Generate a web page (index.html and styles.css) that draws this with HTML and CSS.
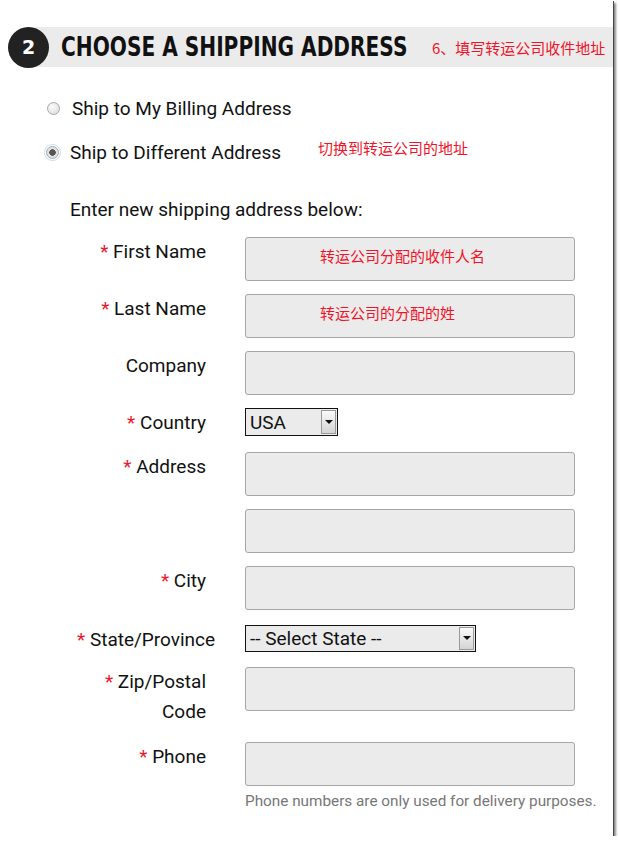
FILE: index.html
```html
<!DOCTYPE html>
<html lang="en">
<head>
    <meta charset="UTF-8">
    <title>Choose a Shipping Address</title>
    <link rel="stylesheet" href="styles.css">
</head>
<body>
    <div class="frame">
        <div class="step-head">
            <span class="step-num">2</span>
            <h2><span>CHOOSE A SHIPPING ADDRESS</span></h2>
            <span class="note">6、填写转运公司收件地址</span>
        </div>

        <div class="ship-options">
            <label class="opt"><input type="radio" name="ship"> Ship to My Billing Address</label>
            <label class="opt"><span class="focus"><input type="radio" name="ship" checked></span> Ship to Different Address <span class="note">切换到转运公司的地址</span></label>
        </div>

        <p class="intro">Enter new shipping address below:</p>

        <div class="address-form">
            <div class="row">
                <label class="lbl"><span class="req">*</span>&nbsp;First Name</label>
                <input class="txt" type="text" value="转运公司分配的收件人名">
            </div>
            <div class="row">
                <label class="lbl"><span class="req">*</span>&nbsp;Last Name</label>
                <input class="txt" type="text" value="转运公司的分配的姓">
            </div>
            <div class="row">
                <label class="lbl">Company</label>
                <input class="txt" type="text">
            </div>
            <div class="row row-country">
                <label class="lbl"><span class="req">*</span>&nbsp;Country</label>
                <div class="sel sel-country">
                    <select><option>USA</option></select>
                    <span class="arrow"></span>
                </div>
            </div>
            <div class="row">
                <label class="lbl"><span class="req">*</span>&nbsp;Address</label>
                <input class="txt" type="text">
            </div>
            <div class="row">
                <label class="lbl"></label>
                <input class="txt" type="text">
            </div>
            <div class="row">
                <label class="lbl"><span class="req">*</span>&nbsp;City</label>
                <input class="txt" type="text">
            </div>
            <div class="row row-state">
                <label class="lbl"><span class="req">*</span>&nbsp;State/Province</label>
                <div class="sel sel-state">
                    <select><option>-- Select State --</option></select>
                    <span class="arrow"></span>
                </div>
            </div>
            <div class="row">
                <label class="lbl"><span class="req">*</span>&nbsp;Zip/Postal Code</label>
                <input class="txt" type="text">
            </div>
            <div class="row row-phone">
                <label class="lbl"><span class="req">*</span>&nbsp;Phone</label>
                <div class="field">
                    <input class="txt" type="text">
                    <p class="help">Phone numbers are only used for delivery purposes.</p>
                </div>
            </div>
        </div>
    </div>
</body>
</html>
```

FILE: styles.css
```css
body {
    margin: 0;
    background: #fff;
    font-family: Roboto, "Noto Sans CJK SC", sans-serif;
    color: #111;
}
.frame {
    position: relative;
    width: 613px;
    height: 836px;
    background: #fff;
    box-shadow: 1px 1px 0 #444, 3px 3px 2px rgba(0, 0, 0, 0.45);
    overflow: hidden;
}
.note {
    font-family: "Noto Sans CJK SC", sans-serif;
    font-size: 15px;
    color: #f0142a;
    white-space: nowrap;
}
.step-head {
    display: flex;
    align-items: center;
    height: 40px;
    margin: 27px 0 0 8px;
    background: linear-gradient(to right, transparent 22px, #ebebeb 22px);
}
.step-num {
    flex-shrink: 0;
    width: 41px;
    height: 41px;
    border-radius: 50%;
    background: #222;
    color: #fff;
    font-family: "DejaVu Sans", sans-serif;
    font-weight: bold;
    font-size: 19px;
    display: flex;
    align-items: center;
    justify-content: center;
}
.step-head h2 {
    flex-shrink: 0;
    width: 346px;
    margin: 0 0 0 12px;
    font-family: "DejaVu Sans", sans-serif;
    font-weight: bold;
    font-size: 27px;
    line-height: 40px;
    white-space: nowrap;
    color: #111;
}
.step-head h2 span {
    display: inline-block;
    transform: scaleX(0.746);
    transform-origin: left center;
}
.step-head .note {
    margin-left: 25px;
}
.ship-options {
    margin: 26px 0 0 47px;
}
.opt {
    display: flex;
    align-items: center;
    height: 30px;
    font-size: 19px;
    margin-bottom: 14px;
}
.opt input {
    appearance: none;
    width: 13px;
    height: 13px;
    margin: 0 12px 0 0;
    border: 1px solid #a8a8a8;
    border-radius: 50%;
    background: radial-gradient(circle at 40% 35%, #fbfbfb, #d8d8d8);
}
.opt input:checked {
    background: radial-gradient(circle, #555 0 3px, #e2e2e2 3.5px);
}
.opt .focus {
    display: inline-flex;
    margin-left: -1px;
}
.opt .focus input {
    margin: 0 11px 0 0;
    outline: 1px solid #c6dcef;
    outline-offset: 1px;
}
.opt .note {
    margin-left: 37px;
    align-self: flex-start;
}
.intro {
    margin: 28px 0 0 70px;
    font-size: 19px;
    line-height: 30px;
}
.address-form {
    margin: 12px 0 0 77px;
}
.row {
    display: flex;
    align-items: flex-start;
    margin-bottom: 13px;
}
.row-country {
    margin-bottom: 14px;
}
.row-state {
    margin-top: 15px;
    margin-bottom: 12px;
}
.row-phone {
    margin-top: 15px;
}
.lbl {
    width: 129px;
    margin-right: 39px;
    text-align: right;
    font-size: 19px;
    line-height: 30px;
    flex-shrink: 0;
}
.req {
    color: #f0142a;
}
.txt {
    box-sizing: border-box;
    width: 330px;
    height: 44px;
    margin: 0;
    padding: 0 0 8px 74px;
    border: 1px solid #a6a6a6;
    border-radius: 3px;
    background: #ebebeb;
    font-family: "Noto Sans CJK SC", sans-serif;
    font-size: 15px;
    color: #f0142a;
}
.sel {
    position: relative;
}
.sel select {
    appearance: none;
    box-sizing: border-box;
    height: 28px;
    margin: 0;
    padding: 0 0 0 4px;
    border: 1px solid #111;
    border-radius: 0;
    background: #ebebeb;
    font-family: Roboto, sans-serif;
    font-size: 19px;
    color: #111;
}
.sel-country select {
    width: 93px;
}
.sel-state select {
    width: 231px;
    height: 27px;
}
.arrow {
    position: absolute;
    top: 2px;
    right: 2px;
    bottom: 2px;
    width: 15px;
    box-sizing: border-box;
    border: 1px solid #9a9a9a;
    background: linear-gradient(#fafafa, #d4d4d4);
}
.arrow::after {
    content: "";
    position: absolute;
    left: 3px;
    top: 9px;
    border-left: 4px solid transparent;
    border-right: 4px solid transparent;
    border-top: 4px solid #111;
}
.sel-state .arrow::after {
    top: 8px;
}
.help {
    margin: 6px 0 0;
    font-size: 15.3px;
    color: #777;
}
```
